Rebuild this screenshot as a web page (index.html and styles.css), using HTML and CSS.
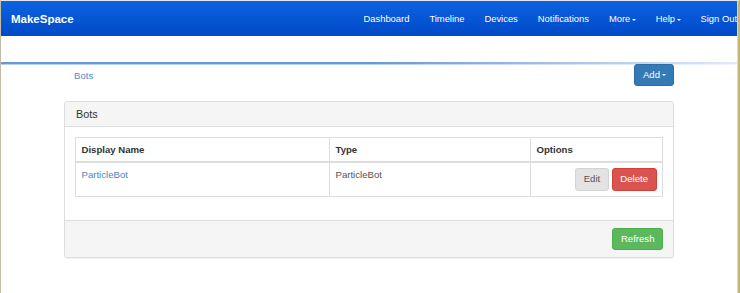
FILE: index.html
```html
<!DOCTYPE html>
<html>
<head>
<meta charset="utf-8">
<title>MakeSpace - Bots</title>
<link rel="stylesheet" href="styles.css">
</head>
<body>
<div class="frame">
  <div class="page">
    <nav class="navbar">
      <a class="brand" href="#">MakeSpace</a>
      <ul class="nav">
        <li><a href="#">Dashboard</a></li>
        <li><a href="#">Timeline</a></li>
        <li><a href="#">Devices</a></li>
        <li><a href="#">Notifications</a></li>
        <li><a href="#">More<span class="caret"></span></a></li>
        <li><a href="#">Help<span class="caret"></span></a></li>
        <li><a href="#">Sign Out</a></li>
      </ul>
    </nav>
    <div class="rule"></div>
    <div class="container">
      <div class="toolbar">
        <ol class="breadcrumb"><li><a href="#">Bots</a></li></ol>
        <button class="btn btn-primary">Add<span class="caret"></span></button>
      </div>
      <div class="panel">
        <div class="panel-heading">Bots</div>
        <div class="panel-body">
          <table class="table">
            <thead>
              <tr>
                <th class="col-name">Display Name</th>
                <th class="col-type">Type</th>
                <th>Options</th>
              </tr>
            </thead>
            <tbody>
              <tr>
                <td><a href="#">ParticleBot</a></td>
                <td class="muted">ParticleBot</td>
                <td class="options"><button class="btn btn-default">Edit</button><button class="btn btn-danger">Delete</button></td>
              </tr>
            </tbody>
          </table>
        </div>
        <div class="panel-footer">
          <button class="btn btn-success">Refresh</button>
        </div>
      </div>
    </div>
  </div>
</div>
</body>
</html>
```
FILE: styles.css
```css
* { box-sizing: border-box; }
html, body { margin: 0; padding: 0; background: #fff; }
body {
  font-family: "Liberation Sans", Arial, Helvetica, sans-serif;
  font-size: 9.6px;
  color: #333;
}
a { text-decoration: none; }

.frame {
  width: 740px;
  height: 293px;
  overflow: hidden;
  border-left: 1px solid #c4bca6;
  border-right: 2px solid #c9b574;
  border-top: 1px solid #e4e9f1;
}
.page {
  height: 100%;
  border-right: 1px solid #e6dbaf;
  overflow: hidden;
}

.navbar {
  height: 35px;
  display: flex;
  align-items: center;
  justify-content: space-between;
  padding-left: 10px;
  background: linear-gradient(#0d63e0, #0049c9);
  overflow: hidden;
}
.brand {
  color: #fff;
  font-weight: bold;
  font-size: 11.5px;
}
.nav {
  list-style: none;
  margin: 0 -10px 0 0;
  padding: 0;
  display: flex;
  flex-shrink: 0;
}
.nav a {
  display: block;
  padding: 0 10px;
  color: #fff;
  font-size: 9.4px;
  white-space: nowrap;
}
.caret {
  display: inline-block;
  width: 0;
  height: 0;
  margin-left: 1.5px;
  vertical-align: middle;
  border-top: 2.7px solid;
  border-left: 2.7px solid transparent;
  border-right: 2.7px solid transparent;
}

.rule {
  height: 3px;
  margin-top: 26px;
  background:
    linear-gradient(to right, rgba(255,255,255,0) 0%, rgba(255,255,255,0) 50%, rgba(255,255,255,0.55) 85%, rgba(255,255,255,0.8) 100%),
    linear-gradient(#6a97d6 0, #6a97d6 2px, #bcd0ee 2px, #bcd0ee 3px);
}

.container {
  width: 610px;
  margin: -1px auto 0;
}
.toolbar {
  height: 22px;
  display: flex;
  align-items: center;
  justify-content: space-between;
}
.breadcrumb {
  list-style: none;
  margin: 0;
  padding: 0 0 0 10px;
}
.breadcrumb a { color: #5b8bc3; }

.btn {
  display: inline-block;
  height: 22.5px;
  padding: 0 7.5px;
  border: 1px solid transparent;
  border-radius: 3px;
  font-family: inherit;
  font-size: 9.6px;
  line-height: 20px;
  cursor: pointer;
}
.btn-primary { background: #337ab7; border-color: #2e6da4; color: #fff; }
.btn-primary .caret { margin-left: 1.5px; }
.btn-default { background: #e3e3e3; border-color: #d3d3d3; color: #555; }
.btn-danger { background: #d9534f; border-color: #d43f3a; color: #fff; margin-left: 3px; }
.btn-success { background: #5cb85c; border-color: #4cae4c; color: #fff; }

.panel {
  margin-top: 15px;
  border: 1px solid #ddd;
  border-radius: 3px;
  background: #fff;
  box-shadow: 0 1px 1px rgba(0,0,0,0.05);
}
.panel-heading {
  background: #f5f5f5;
  border-bottom: 1px solid #ddd;
  padding: 6px 11px;
  font-size: 10.8px;
  line-height: 12px;
  color: #333;
  border-radius: 3px 3px 0 0;
}
.panel-body {
  padding: 10px 10px 11px;
}
.table {
  width: 100%;
  border-collapse: collapse;
  border: 1px solid #ddd;
  margin-bottom: 12px;
}
.table th, .table td {
  border: 1px solid #ddd;
  padding: 5px 5.5px;
  line-height: 13px;
  text-align: left;
  vertical-align: top;
}
.table th {
  font-weight: bold;
  color: #333;
  border-bottom: 2px solid #ddd;
}
.col-name { width: 254px; }
.col-type { width: 201px; }
.table td a { color: #4a86c2; }
.muted { color: #555; }
.table td.options { text-align: right; white-space: nowrap; font-size: 0; }
.table td.options .btn { font-size: 9.6px; vertical-align: top; }

.panel-footer {
  background: #f5f5f5;
  border-top: 1px solid #ddd;
  padding: 7px 10px;
  display: flex;
  justify-content: flex-end;
  border-radius: 0 0 3px 3px;
}
```
